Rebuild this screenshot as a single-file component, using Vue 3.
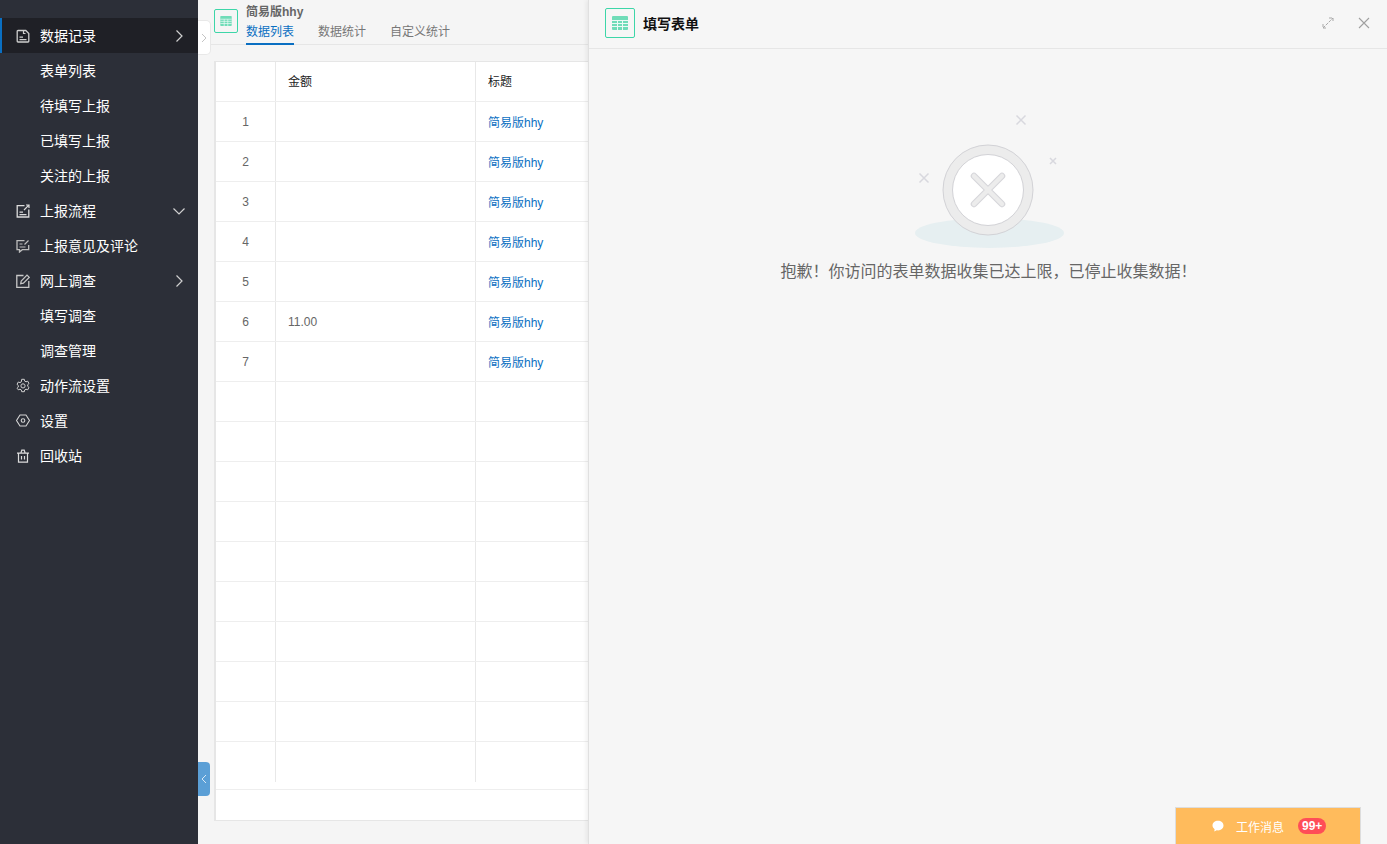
<script setup>
const menu = [
  { label: "数据记录", icon: "doc", arrow: "right", active: true },
  { label: "表单列表" },
  { label: "待填写上报" },
  { label: "已填写上报" },
  { label: "关注的上报" },
  { label: "上报流程", icon: "report", arrow: "down" },
  { label: "上报意见及评论", icon: "comment" },
  { label: "网上调查", icon: "edit", arrow: "right" },
  { label: "填写调查" },
  { label: "调查管理" },
  { label: "动作流设置", icon: "gear" },
  { label: "设置", icon: "hex" },
  { label: "回收站", icon: "trash" },
];

const tabs = ["数据列表", "数据统计", "自定义统计"];

const rows = [];
for (let i = 1; i <= 17; i++) {
  rows.push({
    no: i <= 7 ? i : "",
    amount: i === 6 ? "11.00" : "",
    title: i <= 7 ? "简易版hhy" : "",
  });
}
</script>

<template>
  <div class="page">
    <aside class="sidebar">
      <ul class="menu">
        <li v-for="item in menu" :key="item.label" class="menu-item" :class="{ active: item.active }">
          <span class="menu-icon">
            <svg v-if="item.icon === 'doc'" viewBox="0 0 14 14" width="14" height="14">
              <path d="M2 1.500Q1.200 1.500 1.200 2.300v9.900q0 .8.8.8h10q.8 0 .8-.8V4.500l-3-3z" fill="none" stroke="#cfcfcf" stroke-width="1.300" />
              <path d="M7.500 1.500v3h2M3.500 8.200h3.500M3.500 10.700h7" fill="none" stroke="#cfcfcf" stroke-width="1.200" />
            </svg>
            <svg v-else-if="item.icon === 'report'" viewBox="0 0 14 14" width="14" height="14">
              <path d="M8.500 1.700H1.200v11.300h11.600V5.500" fill="none" stroke="#dcdcdc" stroke-width="1.300" />
              <path d="M8 6l4.800-4.800M10 1h3v3M3.500 8.200h3.500M3.500 10.700h7" fill="none" stroke="#dcdcdc" stroke-width="1.200" />
            </svg>
            <svg v-else-if="item.icon === 'comment'" viewBox="0 0 14 14" width="14" height="14">
              <path d="M8.500 1.700H1v9h2.500v2.300l2.800-2.300h6.400V6" fill="none" stroke="#bdbdbd" stroke-width="1.300" />
              <path d="M3.500 5h3M3.500 8h6M8.500 5.500l4-4" fill="none" stroke="#bdbdbd" stroke-width="1.200" />
            </svg>
            <svg v-else-if="item.icon === 'edit'" viewBox="0 0 14 14" width="14" height="14">
              <path d="M7.500 1.500H.8v12h12V7" fill="none" stroke="#c8c8c8" stroke-width="1.300" />
              <path d="M4.700 9.700l.5-2.700L11 1.200l2.200 2.200L7.400 9.200z" fill="none" stroke="#c8c8c8" stroke-width="1.200" />
            </svg>
            <svg v-else-if="item.icon === 'gear'" viewBox="0 0 14 14" width="15" height="15">
              <path d="M5.700 .8h2.600l.4 1.800 1.300.7 1.700-.6 1.300 2.300-1.300 1.200v1.600l1.300 1.200-1.300 2.300-1.700-.6-1.300.7-.4 1.800H5.700l-.4-1.800-1.300-.7-1.700.6L1 9.800 2.300 8.600V7L1 5.800l1.300-2.300 1.700.6 1.300-.7z" fill="none" stroke="#d0d0d0" stroke-width="1" />
              <circle cx="7" cy="7.400" r="2.100" fill="none" stroke="#d0d0d0" stroke-width="1" />
            </svg>
            <svg v-else-if="item.icon === 'hex'" viewBox="0 0 14 14" width="15" height="15">
              <path d="M4 1.500h6L13.500 7 10 12.500H4L.5 7z" fill="none" stroke="#d6d6d6" stroke-width="1.100" stroke-linejoin="round" />
              <circle cx="7" cy="7" r="1.800" fill="none" stroke="#d6d6d6" stroke-width="1.100" />
            </svg>
            <svg v-else-if="item.icon === 'trash'" viewBox="0 0 14 14" width="14" height="14">
              <path d="M1 4.200h12M2.500 4.200v9h9v-9M4.800 4.200l1-3h2.400l1 3M5.500 7v3.500M8.500 7v3.500" fill="none" stroke="#dcdcdc" stroke-width="1.200" />
            </svg>
          </span>
          <span class="menu-label">{{ item.label }}</span>
          <svg v-if="item.arrow === 'right'" class="menu-arrow" viewBox="0 0 14 14" width="14" height="14">
            <path d="M4.500 1.500L10 7l-5.500 5.500" fill="none" stroke="#d0d0d0" stroke-width="1.200" />
          </svg>
          <svg v-if="item.arrow === 'down'" class="menu-arrow" viewBox="0 0 14 14" width="14" height="14">
            <path d="M1.500 4.500L7 10l5.500-5.500" fill="none" stroke="#d0d0d0" stroke-width="1.200" />
          </svg>
        </li>
      </ul>
      <div class="side-toggle">
        <svg viewBox="0 0 6 10" width="6" height="10">
          <path d="M1 1l4 4-4 4" fill="none" stroke="#c4c4c4" stroke-width="1" />
        </svg>
      </div>
      <div class="side-collapse">
        <svg viewBox="0 0 6 10" width="6" height="10">
          <path d="M5 1L1 5l4 4" fill="none" stroke="#d8e8f5" stroke-width="1" />
        </svg>
      </div>
    </aside>

    <main class="main">
      <header class="main-head">
        <div class="form-icon small">
          <svg viewBox="0 0 16 14" width="12" height="10">
            <rect width="16" height="14" rx="1" fill="#6fdcb8" />
            <path d="M0 4.500h16M0 7.500h16M0 10.500h16M5.500 4.500V14M10.500 4.500V14" stroke="#ecfaf5" stroke-width="1" />
          </svg>
        </div>
        <div class="head-text">
          <div class="head-title">简易版hhy</div>
          <div class="tabs">
            <span v-for="(tab, i) in tabs" :key="tab" class="tab" :class="{ current: i === 0 }">{{ tab }}</span>
          </div>
        </div>
      </header>

      <div class="table-wrap">
        <div class="table">
          <div class="tr th">
            <div class="td no"></div>
            <div class="td amount">金额</div>
            <div class="td title">标题</div>
          </div>
          <div v-for="(row, i) in rows" :key="i" class="tr">
            <div class="td no">{{ row.no }}</div>
            <div class="td amount">{{ row.amount }}</div>
            <div class="td title link">{{ row.title }}</div>
          </div>
          <div class="table-foot"></div>
        </div>
      </div>
    </main>

    <section class="drawer">
      <header class="drawer-head">
        <div class="form-icon">
          <svg viewBox="0 0 16 14" width="16" height="14">
            <rect width="16" height="14" rx="1" fill="#6fdcb8" />
            <path d="M0 4.500h16M0 7.500h16M0 10.500h16M5.500 4.500V14M10.500 4.500V14" stroke="#ecfaf5" stroke-width="1" />
          </svg>
        </div>
        <h2 class="drawer-title">填写表单</h2>
        <div class="drawer-tools">
          <svg viewBox="0 0 12 12" width="12" height="12">
            <path d="M1 11l10-10M7 1h4v4M1 7v4h4" fill="none" stroke="#a8a8a8" stroke-width="1" stroke-dasharray="3 1" />
          </svg>
          <svg viewBox="0 0 12 12" width="12" height="12">
            <path d="M1 1l10 10M11 1L1 11" fill="none" stroke="#a0a0a0" stroke-width="1.100" />
          </svg>
        </div>
      </header>
      <div class="drawer-body">
        <svg class="stop-pic" viewBox="0 0 160 140" width="160" height="140">
          <ellipse cx="81.500" cy="123" rx="74.500" ry="15" fill="#e6eff1" />
          <circle cx="80" cy="80" r="45" fill="#ececec" stroke="#d2d2d6" stroke-width="1" />
          <circle cx="80" cy="80" r="35.500" fill="#fff" stroke="#d2d2d6" stroke-width="1" />
          <path d="M66 66l28 28M94 66L66 94" stroke="#d6d6da" stroke-width="6.500" stroke-linecap="round" />
          <path d="M66 66l28 28M94 66L66 94" stroke="#ececec" stroke-width="4.500" stroke-linecap="round" />
          <path d="M108.500 5.500l9 9M117.500 5.500l-9 9M142 48l6 6M148 48l-6 6M11.500 63.500l9 9M20.500 63.500l-9 9" stroke="#d8d8de" stroke-width="1.500" />
        </svg>
        <p class="stop-msg">抱歉！你访问的表单数据收集已达上限，已停止收集数据！</p>
      </div>
    </section>

    <div class="work-msg">
      <svg viewBox="0 0 12 12" width="12" height="12">
        <path d="M6 .8c3 0 5.500 2 5.500 4.800S9 10.400 6 10.400c-.5 0-.9 0-1.300-.1L2.300 11.500l.3-2.300C1.300 8.300.5 7.100 .5 5.600 .5 2.800 3 .8 6 .8z" fill="#fff" />
      </svg>
      <span class="work-label">工作消息</span>
      <span class="badge">99+</span>
    </div>
  </div>
</template>

<style>
html,
body {
  margin: 0;
  height: 100%;
  overflow: hidden;
}
</style>

<style scoped>
.page {
  position: relative;
  display: flex;
  width: 100%;
  height: 844px;
  overflow: hidden;
  background: #f5f5f5;
  font-family: "Liberation Sans", "Noto Sans CJK SC", sans-serif;
  font-size: 12px;
  color: #666;
}

.sidebar {
  position: relative;
  flex: 0 0 198px;
  background: #2c2f38;
}

.menu {
  list-style: none;
  margin: 0;
  padding: 18px 0 0;
}

.menu-item {
  display: flex;
  align-items: center;
  height: 35px;
  padding: 0 12px 0 16px;
  border-left: 2px solid transparent;
  font-size: 14px;
  color: #fff;
}

.menu-item.active {
  background: #1f2026;
  border-left-color: #0a6fc2;
}

.menu-icon {
  display: flex;
  flex: 0 0 14px;
  justify-content: center;
  width: 14px;
  margin-left: -2px;
  margin-right: 10px;
}

.menu-label {
  flex: 1;
  margin-bottom: 2px;
}

.menu-arrow {
  flex: none;
}

.side-toggle {
  position: absolute;
  top: 20px;
  left: 198px;
  z-index: 3;
  display: flex;
  align-items: center;
  justify-content: center;
  width: 13px;
  height: 35px;
  box-sizing: border-box;
  background: #fff;
  border: 1px solid #e8e8e8;
  border-left: 0;
  border-radius: 0 5px 5px 0;
}

.side-collapse {
  position: absolute;
  top: 762px;
  left: 198px;
  z-index: 3;
  display: flex;
  align-items: center;
  justify-content: center;
  width: 12px;
  height: 34px;
  background: #5b9fd6;
  border-radius: 0 4px 4px 0;
}

.main {
  flex: 1;
  min-width: 0;
}

.main-head {
  display: flex;
  align-items: flex-start;
  height: 44px;
  padding: 0 0 0 16px;
  border-bottom: 1px solid #e6e6e6;
}

.form-icon {
  display: flex;
  flex: none;
  align-items: center;
  justify-content: center;
  box-sizing: border-box;
  width: 30px;
  height: 30px;
  background: #fff;
  border: 1px solid #3dd6a8;
}

.form-icon.small {
  width: 24px;
  height: 24px;
  margin-top: 9px;
  background: #f5f5f5;
  border-radius: 2px;
}

.head-text {
  margin-left: 8px;
}

.head-title {
  margin-top: 5px;
  line-height: 14px;
  font-weight: bold;
  color: #666;
}

.tabs {
  display: flex;
  gap: 24px;
  margin-top: 3px;
}

.tab {
  height: 23px;
  line-height: 20px;
  box-sizing: border-box;
  color: #777;
}

.tab.current {
  color: #0a6fc2;
  border-bottom: 2px solid #0a6fc2;
}

.table-wrap {
  padding: 16px 0 0 16px;
}

.table {
  box-sizing: border-box;
  width: 1160px;
  height: 760px;
  background: #fff;
  border: 1px solid #e6e6e6;
  border-left-width: 2px;
}

.tr {
  display: flex;
  height: 40px;
  box-sizing: border-box;
  border-bottom: 1px solid #eee;
}

.tr:nth-last-child(2) {
  border-bottom: 0;
}

.th {
  padding-bottom: 2px;
  color: #222;
}

.th .td {
  margin-bottom: -2px;
  padding-bottom: 2px;
}

.td {
  display: flex;
  align-items: center;
  box-sizing: border-box;
  padding: 0 12px;
  border-right: 1px solid #e8e8e8;
}

.no {
  flex: 0 0 60px;
  justify-content: center;
}

.amount {
  flex: 0 0 200px;
}

.title {
  flex: 1;
}

.link {
  color: #0a6fc2;
}

.table-foot {
  height: 8px;
  box-sizing: border-box;
  border-bottom: 1px solid #eee;
}

.drawer {
  position: absolute;
  top: 0;
  left: 588px;
  right: 0;
  bottom: 0;
  z-index: 5;
  background: #f6f6f6;
  border-left: 1px solid #e0e0e0;
  box-shadow: -2px 0 4px rgba(0, 0, 0, 0.06);
}

.drawer-head {
  display: flex;
  align-items: center;
  height: 48px;
  padding: 0 17px 0 16px;
  border-bottom: 1px solid #e6e6e6;
}

.drawer-head .form-icon {
  margin-top: -2px;
  background: #f6f6f6;
  border-radius: 2px;
}

.drawer-title {
  flex: 1;
  margin: 0 0 2px 8px;
  font-size: 14px;
  font-weight: bold;
  color: #111;
}

.drawer-tools {
  display: flex;
  gap: 24px;
  align-items: center;
  margin-bottom: 2px;
}

.drawer-body {
  display: flex;
  flex-direction: column;
  align-items: center;
  padding-top: 61px;
}

.stop-pic {
  margin-bottom: 11px;
}

.stop-msg {
  margin: 0 0 0 1px;
  font-size: 16px;
  line-height: 22px;
  color: #666;
}

.work-msg {
  position: absolute;
  left: 1175px;
  top: 807px;
  z-index: 6;
  display: flex;
  align-items: center;
  box-sizing: border-box;
  width: 186px;
  height: 37px;
  padding-left: 36px;
  background: #ffbb5c;
  border: 1px solid #ddd;
  border-bottom: 0;
  font-size: 12px;
  color: #fff;
}

.work-label {
  margin-left: 12px;
}

.badge {
  margin-left: 14px;
  padding: 0 4px;
  height: 16px;
  line-height: 16px;
  border-radius: 8px;
  background: #ff4d57;
  font-size: 12px;
  font-weight: bold;
}
</style>
